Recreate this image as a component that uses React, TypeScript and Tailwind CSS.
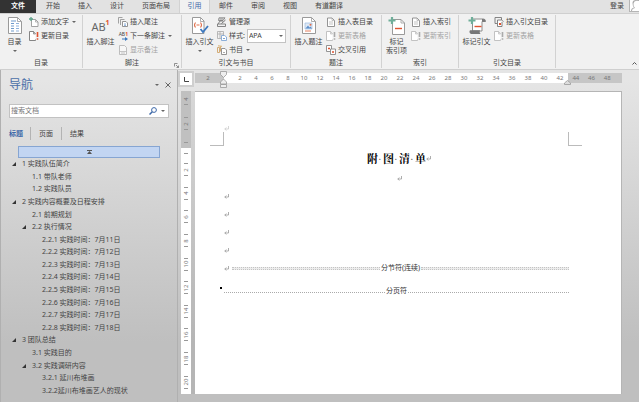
import React from "react";

type IconProps = { className?: string };

const caretDown = (
  <svg viewBox="0 0 4 2" className="h-[2px] w-[4px] shrink-0" aria-hidden="true">
    <path d="M0 0h4L2 2z" fill="#666" />
  </svg>
);

/* ---------- large ribbon icons ---------- */

function TocIcon() {
  return (
    <svg viewBox="0 0 14 17" className="h-[17px] w-[14px]" aria-hidden="true">
      <path d="M.5.5h9l4 4v12H.5z" fill="#fff" stroke="#9a9a9a" />
      <path d="M9.5.5v4h4" fill="none" stroke="#9a9a9a" strokeWidth=".8" />
      <path d="M3 4h5M3 6.500h3M3 9h3M3 11.500h3M3 14h3" stroke="#6f9acb" />
      <path d="M8 6.500h3M8 9h3M8 11.500h3M8 14h3" stroke="#8fb2dc" />
    </svg>
  );
}

function FootnoteIcon() {
  return (
    <span className="flex items-start leading-none" aria-hidden="true">
      <span className="mt-[4px] text-[11px] leading-[11px] text-[#666]">AB</span>
      <span className="mt-[2px] text-[7px] font-bold leading-[7px] text-[#e0522f]">1</span>
    </span>
  );
}

function CitationIcon() {
  return (
    <svg viewBox="0 0 18 17" className="h-[17px] w-[18px]" aria-hidden="true">
      <path d="M1.500.5h8l3.500 3.500v12.500H1.500z" fill="#fff" stroke="#9a9a9a" />
      <path d="M9.500.5v4H13" fill="none" stroke="#9a9a9a" strokeWidth=".8" />
      <path d="M4.500 5.500Q2.500 8 4.500 10.500M9.500 5.500q2 2.500 0 5M5.500 8h3" fill="none" stroke="#e0704c" strokeWidth="1.100" />
      <path d="M9.500 12l2.500 3 5-6" fill="none" stroke="#3c78be" strokeWidth="1.800" />
    </svg>
  );
}

function CaptionIcon() {
  return (
    <svg viewBox="0 0 14 17" className="h-[17px] w-[14px]" aria-hidden="true">
      <path d="M.5.5h9l4 4v12H.5z" fill="#fff" stroke="#9a9a9a" />
      <path d="M9.500.5v4h4" fill="none" stroke="#9a9a9a" strokeWidth=".8" />
      <path d="M3 6h7v6H3z" fill="#dfe9f5" stroke="#9dbbe0" strokeWidth=".7" />
      <path d="M3.500 11.500l2.500-3 1.500 2 1-1 1.500 2z" fill="#5c8fcb" />
      <circle cx="8.500" cy="7.800" r="1" fill="#e0704c" />
      <path d="M3 14h6" stroke="#e0704c" strokeWidth=".9" />
    </svg>
  );
}

function MarkEntryIcon() {
  return (
    <svg viewBox="0 0 18 18" className="h-[18px] w-[18px]" aria-hidden="true">
      <path d="M4.500 2.500h8.500l3.500 3.500v11.500h-12z" fill="#fff" stroke="#9a9a9a" />
      <path d="M13 2.500V6h3.500" fill="none" stroke="#9a9a9a" strokeWidth=".8" />
      <path d="M7 11.500h7" stroke="#e0522f" strokeWidth="1.400" />
      <path d="M4 0v7M.5 3.500h7" stroke="#6fae99" strokeWidth="2.200" />
    </svg>
  );
}

function MarkCitationIcon() {
  return (
    <svg viewBox="0 0 20 18" className="h-[18px] w-[20px]" aria-hidden="true">
      <path d="M5.500 2h11q2 0 2 2.500H15V14H5.500z" fill="#fff" stroke="#8d8d8d" />
      <path d="M15 2q3.500-.5 3.500 2.800H15z" fill="#777" />
      <path d="M3 13.200h10q-1 2 .5 3.800H4q-2.500-1.500-1-3.800z" fill="#777" />
      <path d="M7.500 9.500h7" stroke="#e0522f" strokeWidth="1.400" />
      <path d="M5 0v7M1.500 3.500h7" stroke="#6fae99" strokeWidth="2.200" />
    </svg>
  );
}

/* ---------- small ribbon icons ---------- */

function Small({ children }: { children: React.ReactNode }) {
  return (
    <svg viewBox="0 0 10 10" className="h-[10px] w-[10px] shrink-0" fill="none" aria-hidden="true">
      {children}
    </svg>
  );
}

const AddTextIcon = () => (
  <Small>
    <path d="M2.500 2.500h4L9 5v4.500H2.500z" fill="#fff" stroke="#999" strokeWidth=".9" />
    <path d="M6.500 2.500V5H9" stroke="#999" strokeWidth=".7" />
    <path d="M2 0v4M0 2h4" stroke="#5da58c" strokeWidth="1.300" />
  </Small>
);

function UpdateIcon({ disabled = false }: { disabled?: boolean }) {
  const edge = disabled ? "#bbb" : "#777";
  const mark = disabled ? "#aaa" : "#e0522f";
  return (
    <Small>
      <path d="M6.500 8.500v1h-6v-9h4L6.500 3" fill="#fff" stroke={edge} strokeWidth=".9" />
      <path d="M4.500.5V3h2" stroke={edge} strokeWidth=".7" />
      <path d="M8.500 1v5M8.500 7.200v1.600" stroke={mark} strokeWidth="1.600" />
    </Small>
  );
}

const EndnoteIcon = () => (
  <Small>
    <path d="M.5 6.500v-6h4M2.500 8V2.500h4" stroke="#999" strokeWidth=".9" />
    <path d="M4.500 4.500H8l1.500 1.500v3.500h-5z" fill="#fff" stroke="#888" strokeWidth=".9" />
    <path d="M6 7h2M6 8.400h2" stroke="#5c8fcb" strokeWidth=".7" />
  </Small>
);

const NextFootnoteIcon = () => (
  <span className="flex w-[10px] shrink-0 flex-col items-end" aria-hidden="true">
    <span className="flex text-[5px] leading-[6px] text-[#444]">
      AB<span className="font-bold text-[#e0522f]">1</span>
    </span>
    <svg viewBox="0 0 6 4" className="h-[4px] w-[6px]">
      <path d="M0 1.500h3V0l3 2-3 2V2.500H0z" fill="#3c78be" />
    </svg>
  </span>
);

const ShowNotesIcon = () => (
  <Small>
    <path d="M1.500.5h5l2 2v7h-7z" fill="#f7f7f7" stroke="#b8b8b8" strokeWidth=".9" />
    <path d="M1.500 6.500h7M3 8h4" stroke="#b8b8b8" strokeWidth=".8" />
  </Small>
);

const SourcesIcon = () => (
  <Small>
    <path d="M2 .8h6L6 3.500H1.500zM2.500 2h4" stroke="#777" strokeWidth=".8" />
    <path d="M1 7l2-3h3M.5 9.500V7h8v2.500z" stroke="#777" strokeWidth=".9" />
    <path d="M4.500 6.500L8.500 3" stroke="#666" strokeWidth=".9" />
  </Small>
);

const StyleIcon = () => (
  <Small>
    <path d="M.5.5h6v7h-6zM.5 3h6M3 .5v7" stroke="#aaa" strokeWidth=".8" />
    <path d="M4.500 4.500h3L9.500 6v3.500h-5z" fill="#fff" stroke="#7fa6d4" strokeWidth=".9" />
    <path d="M6 7.500h2" stroke="#5c8fcb" strokeWidth=".8" />
  </Small>
);

const BibliographyIcon = () => (
  <Small>
    <path d="M.5 2.500h2v5h-2zM3.500 1.500v5" stroke="#d0a468" strokeWidth=".9" />
    <path d="M1 .8l4 .5" stroke="#d5a860" strokeWidth=".9" />
    <path d="M4.500 3.500H8l1.500 1.500v4.500h-5z" fill="#fff" stroke="#888" strokeWidth=".9" />
    <path d="M6 7.500h2" stroke="#888" strokeWidth=".7" />
  </Small>
);

const PageIcon = () => (
  <Small>
    <path d="M1.500 1h4.500l2.500 2.500v6h-7z" fill="#fff" stroke="#888" strokeWidth=".9" />
    <path d="M6 1v2.500h2.500M3 5h4M3 7h4" stroke="#aaa" strokeWidth=".7" />
  </Small>
);

const CrossRefIcon = () => (
  <Small>
    <path d="M.5.5h5v6h-5z" fill="#fff" stroke="#888" strokeWidth=".9" />
    <path d="M4.500 4h5v5.500h-5z" fill="#fff" stroke="#888" strokeWidth=".9" />
    <path d="M2 3.500h2M6 7h2" stroke="#e0522f" strokeWidth="1.300" />
  </Small>
);

const AuthoritiesIcon = () => (
  <Small>
    <path d="M1 .5h6.500V3M1 .5v6h2" stroke="#777" strokeWidth=".9" />
    <path d="M3.500 3h4l2 1.500M3.500 3v6.500H8V5" fill="#fff" stroke="#777" strokeWidth=".9" />
    <path d="M5 6h2v2H5z" fill="#e0522f" />
  </Small>
);

/* ---------- ribbon building blocks ---------- */

function BigButton({ icon, lines, caret = false, narrow = false }: {
  icon: React.ReactNode;
  lines: string[];
  caret?: boolean;
  narrow?: boolean;
}) {
  return (
    <button type="button" className={`flex shrink-0 flex-col items-center ${narrow ? "w-[29px]" : "w-[35px]"}`}>
      <span className="mt-[2px] flex h-[20px] items-start justify-center">{icon}</span>
      {lines.map((line) => (
        <span key={line} className="whitespace-nowrap leading-[9px]">{line}</span>
      ))}
      {caret && <span className="flex h-[9px] items-center">{caretDown}</span>}
    </button>
  );
}

function SmallButton({ icon, label, caret = false, disabled = false }: {
  icon: React.ReactNode;
  label: string;
  caret?: boolean;
  disabled?: boolean;
}) {
  return (
    <button
      type="button"
      disabled={disabled}
      className="flex h-[14px] items-center gap-[2px] whitespace-nowrap disabled:text-[#a3a3a3]"
    >
      {icon}
      <span>{label}</span>
      {caret && <span className="ml-px">{caretDown}</span>}
    </button>
  );
}

function Group({ title, width, launcher = false, children }: {
  title: string;
  width: string;
  launcher?: boolean;
  children: React.ReactNode;
}) {
  return (
    <section aria-label={title} className={`relative flex shrink-0 flex-col border-r border-[#d2d2d2] ${width}`}>
      <div className="flex h-[43px]">{children}</div>
      <h2 className="text-center leading-[11px]">{title}</h2>
      {launcher && (
        <button type="button" aria-label="脚注设置" className="absolute right-[2px] bottom-0">
          <svg viewBox="0 0 5 5" className="h-[5px] w-[5px]" fill="none" stroke="#777">
            <path d="M.5 3.500v-3h3M2 2l2.500 2.500M4.500 2.500v2h-2" strokeWidth=".8" />
          </svg>
        </button>
      )}
    </section>
  );
}

const Stack = ({ children }: { children: React.ReactNode }) => (
  <div className="flex flex-col items-start">{children}</div>
);

function Tab({ label }: { label: string }) {
  return <button type="button" role="tab" aria-selected="false" className="px-[9px] pb-[2px]">{label}</button>;
}

function Ribbon() {
  return (
    <header className="shrink-0">
      <nav role="tablist" aria-label="功能区" className="flex h-[13px] bg-[#e2e2e2]">
        <button type="button" role="tab" aria-selected="false" className="mr-px w-[36px] bg-[#333] pb-[2px] font-bold text-white">文件</button>
        {["开始", "插入", "设计", "页面布局"].map((t) => <Tab key={t} label={t} />)}
        <button type="button" role="tab" aria-selected="true" className="w-[31px] border-x border-[#d2d2d2] bg-[#f1f1f1] pb-[2px] text-[#3d68a8]">引用</button>
        {["邮件", "审阅", "视图", "有道翻译"].map((t) => <Tab key={t} label={t} />)}
        <button type="button" className="mr-[5px] ml-auto pb-[2px]">登录</button>
        <svg viewBox="0 0 10 12" className="h-[12px] w-[10px]" role="img" aria-label="用户">
          <path d="M0 0h10v12H0z" fill="#b5b5b5" />
          <path d="M1 0h9v11H1z" fill="#fff" />
          <path d="M2 11q0-3 3-3.500Q3.500 6 3.500 3T7 0h3v11z" fill="#aaa" />
          <path d="M3 11q0-2.500 3-3-2-2-1.500-4.500T7.500.8L10 1v10z" fill="#fff" />
        </svg>
      </nav>
      <div className="flex h-[57px] border-y border-[#cfcfcf] bg-[#f1f1f1] pt-px pb-px">
        <Group title="目录" width="w-[83px]">
          <BigButton narrow icon={<TocIcon />} lines={["目录"]} caret />
          <Stack>
            <SmallButton icon={<AddTextIcon />} label="添加文字" caret />
            <SmallButton icon={<UpdateIcon />} label="更新目录" />
          </Stack>
        </Group>
        <Group title="脚注" width="w-[99px]" launcher>
          <BigButton icon={<FootnoteIcon />} lines={["插入脚注"]} />
          <Stack>
            <SmallButton icon={<EndnoteIcon />} label="插入尾注" />
            <SmallButton icon={<NextFootnoteIcon />} label="下一条脚注" caret />
            <SmallButton icon={<ShowNotesIcon />} label="显示备注" disabled />
          </Stack>
        </Group>
        <Group title="引文与书目" width="w-[109px]">
          <BigButton icon={<CitationIcon />} lines={["插入引文"]} caret />
          <Stack>
            <SmallButton icon={<SourcesIcon />} label="管理源" />
            <div className="flex h-[14px] items-center gap-[2px]">
              <StyleIcon />
              <label htmlFor="cite-style" className="whitespace-nowrap">样式:</label>
              <span className="relative flex">
                <select id="cite-style" defaultValue="APA" className="h-[14px] w-[39px] appearance-none border border-[#c3c3c3] bg-white pl-px text-[7px] leading-[12px]">
                  <option>APA</option>
                  <option>MLA</option>
                </select>
                <span className="pointer-events-none absolute inset-y-0 right-[3px] flex items-center">{caretDown}</span>
              </span>
            </div>
            <SmallButton icon={<BibliographyIcon />} label="书目" caret />
          </Stack>
        </Group>
        <Group title="题注" width="w-[91px]">
          <BigButton icon={<CaptionIcon />} lines={["插入题注"]} />
          <Stack>
            <SmallButton icon={<PageIcon />} label="插入表目录" />
            <SmallButton icon={<UpdateIcon disabled />} label="更新表格" disabled />
            <SmallButton icon={<CrossRefIcon />} label="交叉引用" />
          </Stack>
        </Group>
        <Group title="索引" width="w-[77px]">
          <BigButton narrow icon={<MarkEntryIcon />} lines={["标记", "索引项"]} />
          <Stack>
            <SmallButton icon={<PageIcon />} label="插入索引" />
            <SmallButton icon={<UpdateIcon disabled />} label="更新索引" disabled />
          </Stack>
        </Group>
        <Group title="引文目录" width="w-[97px]">
          <BigButton icon={<MarkCitationIcon />} lines={["标记引文"]} />
          <Stack>
            <SmallButton icon={<AuthoritiesIcon />} label="插入引文目录" />
            <SmallButton icon={<UpdateIcon disabled />} label="更新表格" disabled />
          </Stack>
        </Group>
        <button type="button" aria-label="折叠功能区" className="mr-[2px] mb-[3px] ml-auto self-end">
          <svg viewBox="0 0 5 3" className="h-[3px] w-[5px]" fill="none" stroke="#555">
            <path d="M.5 2.500l2-2 2 2" />
          </svg>
        </button>
      </div>
    </header>
  );
}

/* ---------- navigation pane ---------- */

type Heading = { level: 1 | 2 | 3; text: string; open?: boolean };

const headings: Heading[] = [
  { level: 1, text: "1 实践队伍简介", open: true },
  { level: 2, text: "1.1 带队老师" },
  { level: 2, text: "1.2 实践队员" },
  { level: 1, text: "2 实践内容概要及日程安排", open: true },
  { level: 2, text: "2.1 前期规划" },
  { level: 2, text: "2.2 执行情况", open: true },
  { level: 3, text: "2.2.1 实践时间：7月11日" },
  { level: 3, text: "2.2.2 实践时间：7月12日" },
  { level: 3, text: "2.2.3 实践时间：7月13日" },
  { level: 3, text: "2.2.4 实践时间：7月14日" },
  { level: 3, text: "2.2.5 实践时间：7月15日" },
  { level: 3, text: "2.2.6 实践时间：7月16日" },
  { level: 3, text: "2.2.7 实践时间：7月17日" },
  { level: 3, text: "2.2.8 实践时间：7月18日" },
  { level: 1, text: "3 团队总结", open: true },
  { level: 2, text: "3.1 实践目的" },
  { level: 2, text: "3.2 实践调研内容", open: true },
  { level: 3, text: "3.2.1 延川布堆画" },
  { level: 3, text: "3.2.2延川布堆画艺人的现状" },
];

const indent = { 1: "pl-[11px]", 2: "pl-[21px]", 3: "pl-[31px]" };

function NavigationPane() {
  return (
    <aside aria-label="导航" className="flex w-[178px] shrink-0 flex-col border-r border-l border-[#b0b0b0]">
      <div className="flex h-[30px] items-center pr-[6px] pl-[8px]">
        <h1 className="flex-1 text-[12px] leading-[16px] text-[#4a6fa8]">导航</h1>
        <button type="button" aria-label="任务窗格选项" className="mr-[6px]">{caretDown}</button>
        <button type="button" aria-label="关闭">
          <svg viewBox="0 0 6 6" className="h-[6px] w-[6px]" stroke="#666">
            <path d="M.5.5l5 5M5.500.5l-5 5" />
          </svg>
        </button>
      </div>
      <div className="mx-[8px] mt-[4px] flex h-[14px] items-center border border-[#c2c2c2] bg-white">
        <input type="search" aria-label="搜索文档" placeholder="搜索文档" className="min-w-0 flex-1 bg-transparent pl-px text-[7px] leading-[12px] outline-none placeholder:text-[#777]" />
        <button type="button" aria-label="搜索" className="mr-[4px]">
          <svg viewBox="0 0 8 8" className="h-[8px] w-[8px]" fill="none" stroke="#3d68a8">
            <circle cx="5" cy="3" r="2.400" />
            <path d="M3.300 4.700L.5 7.500" strokeWidth="1.500" />
          </svg>
        </button>
        <button type="button" aria-label="搜索选项" className="mr-[3px]">{caretDown}</button>
      </div>
      <div role="tablist" aria-label="导航视图" className="mx-[8px] mt-[9px] flex h-[13px] divide-x divide-[#b3b3b3]">
        <button type="button" role="tab" aria-selected="true" className="pr-[7px] font-bold text-[#3d68a8]">标题</button>
        <button type="button" role="tab" aria-selected="false" className="px-[8px]">页面</button>
        <button type="button" role="tab" aria-selected="false" className="px-[8px]">结果</button>
      </div>
      <button type="button" aria-label="跳转到文档开头" className="mx-[17px] mt-[6px] flex h-[12px] shrink-0 items-center justify-center border border-[#86a5d2] bg-[#c2d5f2]">
        <svg viewBox="0 0 5 4" className="h-[4px] w-[5px]">
          <path d="M0 0h5v1H0zM2.500 1L5 4H0z" fill="#555" />
        </svg>
      </button>
      <ul className="mb-[5px] flex flex-1 flex-col">
        {headings.map((h) => (
          <li key={h.text} className={`flex flex-1 items-center ${indent[h.level]}`}>
            <span className="w-[10px] shrink-0">
              {h.open && (
                <svg viewBox="0 0 4 4" className="h-[4px] w-[4px]" aria-hidden="true">
                  <path d="M4 0v4H0z" fill="#333" />
                </svg>
              )}
            </span>
            <a href="#document" className="whitespace-nowrap leading-[12px]">{h.text}</a>
          </li>
        ))}
      </ul>
    </aside>
  );
}

/* ---------- rulers ---------- */

const evens = (from: number, count: number) => Array.from({ length: count }, (_, i) => from + i * 2);

function HorizontalRuler() {
  return (
    <div className="relative mt-[3px] mr-[17px] ml-px flex h-[10px] flex-1 text-[6px] leading-[10px] text-[#777]">
      <div className="w-[29px] shrink-0 bg-[#c6c6c6] pr-[3px] text-center">2</div>
      <div className="flex flex-1 bg-white pl-[8px]">
        {evens(2, 21).map((n) => <span key={n} className="flex w-0 flex-1 justify-center">{n}</span>)}
      </div>
      <div className="flex w-[54px] shrink-0 bg-[#c6c6c6] pr-[7px]">
        {evens(44, 3).map((n) => <span key={n} className="flex-1 text-center">{n}</span>)}
      </div>
      <svg viewBox="0 0 7 18" className="absolute -top-[2px] left-[25px] h-[18px] w-[7px]" fill="#eee" stroke="#999" strokeWidth=".8" aria-hidden="true">
        <path d="M.5.5h6v3l-3 3-3-3zM3.500 8l3 3v2h-6v-2zM.5 13.500h6v3h-6z" />
      </svg>
      <svg viewBox="0 0 7 5" className="absolute right-[51px] -bottom-[2px] h-[5px] w-[7px]" fill="#ddd" stroke="#999" strokeWidth=".8" aria-hidden="true">
        <path d="M3.500.5l3 2.500v1.500h-6V3z" />
      </svg>
    </div>
  );
}

const Tick = () => <span className="h-px w-[4px] shrink-0 bg-[#999]" />;

function RulerMark({ n }: { n: number }) {
  return (
    <div className="flex h-0 flex-1 flex-col items-center justify-center">
      <Tick />
      <span className="flex h-[11px] w-[10px] items-center justify-center">
        <span className="-rotate-90 leading-[8px]">{n}</span>
      </span>
      <Tick />
    </div>
  );
}

function VerticalRuler() {
  return (
    <div className="flex w-[10px] flex-col text-[6px] text-[#777]">
      <div className="flex h-[57px] shrink-0 flex-col items-center bg-[#c0c0c0]">
        <span className="flex h-[13px] items-end">
          <span className="-rotate-90 leading-[10px]">4</span>
        </span>
        <span className="flex h-[7px] items-start"><Tick /></span>
        <RulerMark n={2} />
        <span className="flex h-[12px] items-center"><Tick /></span>
      </div>
      <div className="flex flex-1 flex-col items-center bg-white">
        <span className="flex h-[10px] shrink-0 items-center"><Tick /></span>
        {evens(2, 10).map((n) => <RulerMark key={n} n={n} />)}
      </div>
    </div>
  );
}

/* ---------- document ---------- */

const Return = ({ className = "" }: IconProps) => (
  <svg viewBox="0 0 5 5" className={`h-[5px] w-[5px] shrink-0 ${className}`} fill="none" stroke="#999" strokeWidth=".8" aria-hidden="true">
    <path d="M4.500 0v3H.8M2.300 1.500L.8 3l1.500 1.500" />
  </svg>
);

const sectionRule = <span className="h-[3px] flex-1 border-y border-dotted border-[#c4c4c4] bg-[#ececec]" />;
const pageRule = <span className="mt-[2px] flex-1 border-t border-dotted border-[#aaa]" />;

function DocumentPage() {
  return (
    <article id="document" className="flex flex-1 flex-col border-t border-r border-[#b5b5b5] bg-white px-[15px] text-[#333]">
      <Return className="mt-[34px] ml-[14px] opacity-50" />
      <div className="mt-px flex h-[14px] shrink-0 justify-between pr-[24px]" aria-hidden="true">
        <span className="w-[14px] border-r border-b border-[#bbb]" />
        <span className="w-[14px] border-b border-l border-[#bbb]" />
      </div>
      <div className="flex flex-col pr-[37px] pl-[14px]">
        <h1 className="mt-[4px] flex items-center justify-center pl-[5px] font-['Noto_Serif_CJK_SC','Noto_Sans_CJK_SC',serif] text-[11px] font-bold leading-[16px] text-black">
          {["附", "图", "清"].map((c) => (
            <span key={c} className="flex w-[16px]">
              {c}<span className="font-normal text-[#555]">·</span>
            </span>
          ))}
          单<Return />
        </h1>
        <p className="mt-[3px] flex h-[18px] items-center justify-center pl-[5px]"><Return /></p>
        {[0, 1, 2, 3].map((n) => (
          <p key={n} className="flex h-[18px] items-center"><Return /></p>
        ))}
        <p className="flex h-[18px] items-center">
          <Return className="mr-[3px]" />
          {sectionRule}
          <span className="px-px leading-[12px]">分节符(连续)</span>
          {sectionRule}
        </p>
        <p className="relative mt-[5px] flex h-[18px] items-center">
          <span className="absolute top-[5px] -left-[4px] h-[2px] w-[2px] bg-black" />
          {pageRule}
          <span className="px-px leading-[12px]">分页符</span>
          {pageRule}
        </p>
      </div>
    </article>
  );
}

export default function App() {
  return (
    <div className="flex min-h-screen flex-col bg-linear-to-b from-[#e5e5e5] from-20% to-[#bfbfbf] to-85% font-['Noto_Sans','Noto_Sans_CJK_SC',sans-serif] text-[7px] leading-[12px] text-[#444]">
      <Ribbon />
      <div className="flex flex-1">
        <NavigationPane />
        <main className="flex min-w-0 flex-1 flex-col">
          <div className="flex h-[21px] shrink-0">
            <button type="button" aria-label="制表符" className="mt-px flex h-[16px] w-[16px] shrink-0 items-center justify-center border-2 border-[#cfcfcf] bg-white">
              <svg viewBox="0 0 5 5" className="h-[5px] w-[5px]" fill="none" stroke="#444">
                <path d="M.5 0v4.500H5" />
              </svg>
            </button>
            <HorizontalRuler />
          </div>
          <div className="mr-[17px] mb-[8px] flex flex-1 pl-[3px]">
            <VerticalRuler />
            <div className="w-[4px] shrink-0 bg-black/5" />
            <DocumentPage />
          </div>
        </main>
      </div>
    </div>
  );
}
